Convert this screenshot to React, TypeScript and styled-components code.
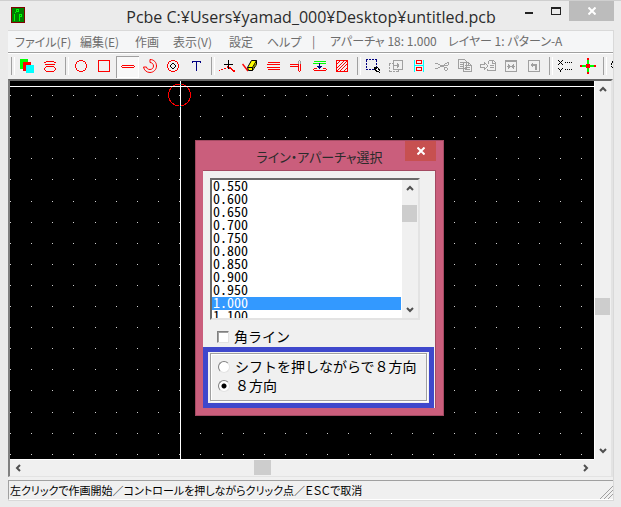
import React from "react";
import styled, { createGlobalStyle, css } from "styled-components";

const Global = createGlobalStyle`
  * { box-sizing: border-box; }
  html, body { margin: 0; padding: 0; }
  body { background: #ebebeb; overflow: hidden; }
  button { font: inherit; color: inherit; border: 0; background: none; padding: 0; margin: 0; }
`;

const jp = `"Noto Sans CJK JP", sans-serif`;

const AppWindow = styled.div`
  min-height: 100vh;
  display: flex;
  flex-direction: column;
  padding: 0 7px 6px 8px;
  background: #ebebeb;
  border-top: 1px solid #cfcfcf;
  font-family: ${jp};
`;

const TitleBar = styled.header`
  display: grid;
  grid-template-columns: 100px minmax(0, 1fr) 100px;
  height: 29px;
`;

const Logo = styled.svg`
  width: 14px;
  height: 16px;
  margin: 6px 0 0 3px;
`;

const Title = styled.h1`
  margin: 0;
  padding-top: 3px;
  font: 400 16px/26px "Open Sans", ${jp};
  color: #2b2b2b;
  text-align: center;
  white-space: nowrap;
`;

const Caption = styled.div`
  display: flex;
  justify-content: flex-end;
  align-items: flex-start;
`;

const CaptionButton = styled.button<{ $close?: boolean }>`
  width: ${(p) => (p.$close ? 45 : 27)}px;
  height: 20px;
  background: ${(p) => (p.$close ? "#bcbcbc" : "transparent")};
  svg { display: block; margin: 0 auto; }
`;

const Client = styled.main`
  flex: 1;
  display: flex;
  flex-direction: column;
  min-width: 0;
  border-top: 1px solid #d9d9d9;
  border-right: 1px solid #d9d9d9;
  border-bottom: 1px solid #d9d9d9;
  background: #f0f0f0;
`;

const MenuBar = styled.nav`
  display: grid;
  grid-template-columns: 65px 55px 38px 56px 38px 45px 18px 118px 1fr;
  height: 22px;
  padding-left: 7px;
  background: #f5f6f7;
  border-bottom: 1px solid #a0a0a0;
  box-shadow: inset 0 -1px 0 #fafafa;
  font: 12px/20px ${jp};
  font-feature-settings: "palt";
  color: #6d6d6d;
`;

const MenuItem = styled.button`
  text-align: left;
  white-space: nowrap;
`;

const MenuInfo = styled.span`
  white-space: nowrap;
`;

const ToolBar = styled.div`
  display: flex;
  height: 26px;
  padding-top: 2px;
  overflow: hidden;
  border-top: 1px solid #fff;
`;

const Separator = styled.span`
  flex: none;
  width: 8px;
  height: 20px;
  padding-left: 3px;
  &::before {
    content: "";
    display: block;
    width: 2px;
    height: 18px;
    margin-top: 1px;
    border-left: 1px solid #a0a0a0;
    border-right: 1px solid #fff;
  }
`;

const ToolButton = styled.button<{ $pressed?: boolean }>`
  flex: none;
  width: 23px;
  height: 22px;
  padding: 2px 3px 3px;
  ${(p) =>
    p.$pressed &&
    css`
      background: #f8f8f8;
      box-shadow: inset 1px 1px 0 #a0a0a0, inset -1px -1px 0 #fff;
    `}
  svg { display: block; width: 17px; height: 17px; }
`;

const Workspace = styled.div`
  flex: 1;
  display: grid;
  grid-template-columns: minmax(0, 1fr) 17px;
  grid-template-rows: minmax(0, 1fr) 17px;
  border-top: 2px solid #696969;
  border-left: 2px solid #808080;
  border-right: 2px solid #e3e3e3;
  border-bottom: 1px solid #e3e3e3;
`;

const Board = styled.section`
  position: relative;
  background: #000;
  min-height: 340px;
`;

const BoardDrawing = styled.svg`
  position: absolute;
  inset: 0;
  width: 100%;
  height: 100%;
`;

const ScrollTrack = styled.div<{ $vertical?: boolean }>`
  display: flex;
  flex-direction: ${(p) => (p.$vertical ? "column" : "row")};
  background: #f0f0f0;
  border-left: ${(p) => (p.$vertical ? "1px solid #fff" : "0")};
  border-top: ${(p) => (p.$vertical ? "0" : "1px solid #fff")};
`;

const ScrollSpace = styled.span<{ $grow: number }>`
  flex: ${(p) => p.$grow} 1 0;
`;

const ScrollThumb = styled.span<{ $vertical?: boolean }>`
  flex: none;
  width: ${(p) => (p.$vertical ? 15 : 17)}px;
  height: ${(p) => (p.$vertical ? 17 : 15)}px;
  background: #cdcdcd;
`;

const ArrowButton = styled.button<{ $turn: number }>`
  flex: none;
  width: 16px;
  height: 16px;
  svg { display: block; margin: auto; transform: rotate(${(p) => p.$turn}deg); }
`;

const StatusBar = styled.footer`
  display: flex;
  justify-content: space-between;
  height: 20px;
  margin-top: 3px;
  padding-left: 1px;
  border-top: 1px solid #a0a0a0;
  border-left: 1px solid #a0a0a0;
  border-bottom: 1px solid #fff;
  font: 11px/18px ${jp};
  color: #000;
  white-space: nowrap;
`;

const StatusText = styled.span`
  font-feature-settings: "palt";
`;

const Grip = styled.svg`
  width: 14px;
  height: 14px;
  align-self: flex-end;
`;

const Dialog = styled.section`
  position: absolute;
  left: 185px;
  top: 59px;
  width: 249px;
  padding: 0 7px 7px;
  background: #ca5e7c;
  border: 1px solid #a34a62;
`;

const DialogHeader = styled.header`
  display: grid;
  grid-template-columns: 31px 1fr 31px;
  height: 29px;
`;

const DialogTitle = styled.h2`
  grid-column: 2;
  margin: 0;
  padding-top: 3px;
  font: 400 13px/26px ${jp};
  font-feature-settings: "palt";
  color: #2b2b2b;
  text-align: center;
  white-space: nowrap;
`;

const DialogClose = styled.button`
  height: 20px;
  background: #c75050;
  svg { display: block; margin: auto; }
`;

const DialogBody = styled.form`
  padding: 7px 0 0;
  background: #f0f0f0;
  border: 1px solid #a34a62;
  border-bottom: 0;
  border-left: 0;
`;

const ListFrame = styled.div`
  display: flex;
  width: 210px;
  height: 142px;
  margin-left: 7px;
  border: 2px solid #696969;
  border-right-color: #e3e3e3;
  border-bottom-color: #e3e3e3;
  background: #fff;
`;

const ApertureList = styled.select`
  flex: 1;
  min-width: 0;
  height: 138px;
  padding: 0;
  border: 0;
  outline: 0;
  overflow: hidden;
  scrollbar-width: none;
  background: #fff;
  font: 14px/13px ${jp};
  font-feature-settings: "hwid";
  color: #000;
  option {
    display: flex;
    align-items: center;
    height: 13px;
    min-height: 13px;
    padding: 0 1px 3px;
    line-height: 13px;
    overflow: hidden;
  }
  option:checked {
    background: linear-gradient(#3399ff, #3399ff);
    color: #fff;
    -webkit-text-fill-color: #fff;
  }
`;

const Choice = styled.label`
  display: flex;
  align-items: center;
  gap: 5px;
  height: 19px;
  font: 14px/19px ${jp};
  color: #000;
  white-space: nowrap;
`;

const CheckRow = styled.div`
  padding: 7px 0 1px 14px;
`;

const CheckBox = styled.input`
  appearance: none;
  width: 12px;
  height: 12px;
  margin: 0;
  background: #fff;
  border: 1px solid #808080;
  border-right-color: #e3e3e3;
  border-bottom-color: #e3e3e3;
  box-shadow: inset 1px 1px 0 #a0a0a0;
`;

const Radio = styled.input`
  appearance: none;
  width: 12px;
  height: 12px;
  margin: 0;
  border-radius: 50%;
  background: #fff;
  border: 1px solid #808080;
  border-right-color: #e3e3e3;
  border-bottom-color: #e3e3e3;
  &:checked { background: radial-gradient(circle, #000 0 2px, #fff 3px); }
`;

const Highlight = styled.div`
  width: 231px;
  padding: 1px 2px 2px;
  border: 5px solid #3f48cc;
`;

const Group = styled.fieldset`
  margin: 0;
  padding: 3px 0 5px 7px;
  min-width: 0;
  border: 1px solid #a0a0a0;
  box-shadow: inset 1px 1px 0 #fff, 1px 1px 0 #fff;
`;

const R = "#f00";
const G = "#a0a0a0";

const icons: Record<string, React.ReactNode> = {
  layers: (
    <>
      <path d="M1 1h8v10H1z" fill="#0f0" />
      <path d="M4 4h8v9H4z" fill={R} />
      <path d="M7 7h8v8H7z" fill="#0ff" />
    </>
  ),
  pads: (
    <g fill="none" stroke={R}>
      <path d="M4 3.5h8M2 4.5h2M12 4.5h2M3 6.5h10" />
      <path d="M4 8.5h8M4 13.5h8M3.5 9v1M12.5 9v1M2.5 10v2M13.5 10v2M3.5 12v1M12.5 12v1" />
    </g>
  ),
  circle: <path d="M6 2.5h4M6 13.5h4M2.5 6v4M13.5 6v4M4 3.5h2M10 3.5h2M4 12.5h2M10 12.5h2M3.5 4v2M3.5 10v2M12.5 4v2M12.5 10v2" stroke={R} />,
  square: <rect x="2.5" y="2.5" width="11" height="11" fill="none" stroke={R} />,
  line: <path d="M3 7.5h12M3 9.5h12M2 8.5h1M15 8.5h1" stroke={R} />,
  arc: (
    <g fill="none" stroke={R} shapeRendering="auto">
      <path d="M8 1.5c4 0 6.500 3 6.500 6.500s-3 6.500-6.500 6.500-6-2.500-6.500-5.500" />
      <path d="M8 1.500v3c2 0 3.500 1.500 3.500 3.500S10 11.500 8 11.500 4.500 10.500 4.500 9h-3" />
    </g>
  ),
  donut: (
    <>
      <path d="M6 2.5h4M6 13.5h4M2.5 6v4M13.500 6v4M4 3.500h2M10 3.500h2M4 12.500h2M10 12.500h2M3.500 4v2M3.500 10v2M12.500 4v2M12.500 10v2" stroke={R} />
      <path d="M7 5.500h2M7 10.500h2M5.500 7v2M10.500 7v2M6 6.500h1M9 6.500h1M6 9.500h1M9 9.500h1" stroke="#000" />
    </>
  ),
  text: <path d="M4 3h9v2h-1v-1H9v9H8V4H5v1H4z" fill="#000080" />,
  bend: (
    <>
      <path d="M0 12h2v-1h3v-1h3v-2h2v1h2v1h1v1h1v1h2v2h-2v-1h-1v-1h-1v-1h-2v-1H7v1H4v1H1v1H0z" fill={R} />
      <path d="M9.500 2v9M5 6.500h9" stroke="#000" />
    </>
  ),
  eraser: (
    <>
      <path d="M0.500 6l5.500 7" stroke={R} strokeWidth="1.500" shapeRendering="auto" />
      <path d="M5.500 9.500l4-7h5v4l-4 6h-4z" fill="#ff0" stroke="#000" shapeRendering="auto" />
      <path d="M5.500 9.500h5l4-7M10.500 9.500v3" fill="none" stroke="#000" shapeRendering="auto" />
      <path d="M11 10l3-5v2l-3 5z" fill="#808000" />
    </>
  ),
  bars: <path d="M3 4.500h12M2 6.500h13M2 9.500h13M3 11.500h12" stroke={R} />,
  join: (
    <>
      <path d="M2 6.500h9M2 8.500h8M10.500 6v7M12.500 6v7M11 13.500h1" stroke={R} />
      <path d="M10.500 3v3M12.500 3v3M11 2.500h1" stroke={G} />
    </>
  ),
  gap: (
    <>
      <path d="M3 3.500h12M2 5.500h13" stroke="#0f0" />
      <path d="M3 10.500h3M12 10.500h3M2 11.500h1M15 11.500h1M3 12.500h12" stroke={R} />
      <path d="M9 5v3h2l-2.500 3L6 8h2V5z" fill="#000080" />
    </>
  ),
  hatch: (
    <g fill="none" stroke={R}>
      <rect x="2.500" y="2.500" width="11" height="11" />
      <path d="M3 6l3-3M3 10l7-7M3 13L13 3M6 13l7-7M10 13l3-3" />
    </g>
  ),
  select: (
    <>
      <path d="M1 1.500h11M1.500 2v10M11.500 2v7M1 11.500h8" stroke="#000080" strokeDasharray="2 1" />
      <path d="M9 9h4v1h1v1h1v2h-1v1h-3v-1h-1v-1H9z" fill="#000" />
      <path d="M11 11h1v-1h1v2h1v1h-2v-1h-1z" fill="#fff" />
      <path d="M14 14h1v1h-1z" fill="#000" />
    </>
  ),
  move: (
    <g fill="none" stroke={G}>
      <rect x="5.500" y="2.500" width="9" height="9" />
      <path d="M1 5.500h4M1.500 6v8M2 13.500h8M10.500 12v2" strokeDasharray="2 1" />
      <path d="M5 7.500h6M9.500 5v5M10.500 6v3" />
    </g>
  ),
  align: (
    <>
      <path d="M3.500 2v12M12.500 2v12M4 7.500h8" stroke="#0ff" />
      <g fill="none" stroke={R}>
        <path d="M5.500 2.500h5v3h-5zM5.500 9.500h5v3h-5z" />
      </g>
    </>
  ),
  cut: (
    <g fill="none" stroke={G}>
      <path d="M1 5.500h3M4 6.500h2M6 7.500h4M1 10.500h3M4 9.500h2M6 8.500h4M10.500 6v2M11 5.500h2M13 4.500h2M14.500 5v2M11 7.500h3M10.500 9v3M11 9.500h2M13.500 10v2M11 12.500h2" />
    </g>
  ),
  copy: (
    <g fill="none" stroke={G}>
      <path d="M1.500 1.500h6l2 2v7h-8zM6.500 4.500h5l3 3v6h-8z" />
      <path d="M3 4.500h3M3 6.500h3M3 8.500h3M8 7.500h3M8 9.500h5M8 11.500h5M11.500 5v2.500h3" />
    </g>
  ),
  paste: (
    <g fill="none" stroke={G}>
      <path d="M8.500 2.500h5l2 2v8h-8v-2M8.500 2.500v3M12.500 3v2.500h3M10 7.500h4M10 9.500h4" />
      <path d="M0.500 6.500h4v-2l3.500 3.500-3.500 3.500v-2h-4z" />
    </g>
  ),
  flip: (
    <g stroke={G}>
      <path d="M2.500 2.500h11v11h-11z" fill="none" />
      <path d="M3 3.500h10M4 8.500h8M5.500 6v5M10.500 6v5M6.500 7v3M9.500 7v3" />
    </g>
  ),
  rotate: (
    <>
      <path d="M2.500 2.500h11v11h-11z" fill="none" stroke={G} />
      <path d="M4 7l3-3v2h4v6H9V8H7v2z" fill={G} />
    </>
  ),
  coords: (
    <>
      <path d="M1 2h1v1H1zM5 2h1v1H5zM2 3h1v1H2zM4 3h1v1H4zM3 4h1v1H3zM2 5h1v1H2zM4 5h1v1H4zM1 6h1v1H1zM5 6h1v1H5zM1 10h1v1H1zM5 10h1v1H5zM2 11h1v1H2zM4 11h1v1H4zM3 12h1v2H3z" fill="#000" />
      <path d="M8 4.500h8M8 11.500h8" stroke="#000" strokeDasharray="1 1" />
    </>
  ),
  origin: (
    <>
      <path d="M7 0h2v16H7zM0 7h16v2H0z" fill="#0f0" />
      <path d="M7 0h2v2H7zM7 14h2v2H7zM0 7h2v2H0zM14 7h2v2h-2zM6 6h4v4H6z" fill={R} />
    </>
  ),
  zoom: <circle cx="5.500" cy="7" r="5" fill="none" stroke="#000" strokeDasharray="2 1" />,
};

const toolGroups: [string, string][][] = [
  [["layers", "レイヤー"], ["pads", "パッド"]],
  [["circle", "円"], ["square", "四角"], ["line", "ライン"], ["arc", "円弧"], ["donut", "ドーナツ"], ["text", "文字"]],
  [["bend", "折り曲げ"], ["eraser", "消去"], ["bars", "平行"], ["join", "結合"], ["gap", "間隔"], ["hatch", "塗りつぶし"]],
  [["select", "選択"], ["move", "移動"], ["align", "整列"], ["cut", "切り取り"], ["copy", "コピー"], ["paste", "貼り付け"], ["flip", "反転"], ["rotate", "回転"]],
  [["coords", "座標"], ["origin", "原点"]],
  [["zoom", "ズーム"]],
];

const menus = ["ファイル(F)", "編集(E)", "作画", "表示(V)", "設定", "ヘルプ"];

const apertures = ["0.550", "0.600", "0.650", "0.700", "0.750", "0.800", "0.850", "0.900", "0.950", "1.000", "1.100"];

const dotPath = Array.from({ length: 90 }, (_, c) =>
  Array.from({ length: 60 }, (_, r) => `M${Math.round(c * 21.15)} ${Math.round(14 + r * 21.1)}h1v1h-1z`).join("")
).join("");

function Arrow({ turn, label }: { turn: number; label: string }) {
  return (
    <ArrowButton type="button" $turn={turn} aria-label={label}>
      <svg width="8" height="8" viewBox="0 0 8 8">
        <path d="M1 6l3-3 3 3" fill="none" stroke="#505050" strokeWidth="2" />
      </svg>
    </ArrowButton>
  );
}

function ScrollBar({ vertical, before, after }: { vertical?: boolean; before: number; after: number }) {
  return (
    <ScrollTrack $vertical={vertical}>
      <Arrow turn={vertical ? 0 : -90} label={vertical ? "上へ" : "左へ"} />
      <ScrollSpace $grow={before} />
      <ScrollThumb $vertical={vertical} />
      <ScrollSpace $grow={after} />
      <Arrow turn={vertical ? 180 : 90} label={vertical ? "下へ" : "右へ"} />
    </ScrollTrack>
  );
}

function ApertureDialog() {
  return (
    <Dialog role="dialog" aria-labelledby="dialog-title">
      <DialogHeader>
        <DialogTitle id="dialog-title">ライン・アパーチャ選択</DialogTitle>
        <DialogClose type="button" aria-label="閉じる">
          <svg width="8" height="8" viewBox="0 0 8 8">
            <path d="M0.500 0.500l7 7M7.500 0.500l-7 7" stroke="#fff" strokeWidth="2" />
          </svg>
        </DialogClose>
      </DialogHeader>
      <DialogBody>
        <ListFrame>
          <ApertureList size={11} defaultValue="1.000" aria-label="アパーチャ">
            {apertures.map((a) => (
              <option key={a}>{a}</option>
            ))}
          </ApertureList>
          <ScrollBar vertical before={9} after={82} />
        </ListFrame>
        <CheckRow>
          <Choice>
            <CheckBox type="checkbox" />
            角ライン
          </Choice>
        </CheckRow>
        <Highlight>
          <Group>
            <Choice>
              <Radio type="radio" name="direction" />
              シフトを押しながらで８方向
            </Choice>
            <Choice>
              <Radio type="radio" name="direction" defaultChecked />
              ８方向
            </Choice>
          </Group>
        </Highlight>
      </DialogBody>
    </Dialog>
  );
}

export default function App() {
  return (
    <>
      <Global />
      <AppWindow>
        <TitleBar>
          <Logo viewBox="0 0 14 16" shapeRendering="crispEdges">
            <rect x="0.500" y="0.500" width="13" height="15" fill="#008000" stroke="#800000" />
            <path d="M3.500 14V6.500M4 5.500h1M5.500 2.500h2v2h-2zM8.500 14v-4M8.500 7.500h2v2h-2z" fill="none" stroke="#0f0" />
          </Logo>
          <Title>Pcbe C:¥Users¥yamad_000¥Desktop¥untitled.pcb</Title>
          <Caption>
            <CaptionButton aria-label="最小化">
              <svg width="8" height="8" viewBox="0 0 8 8"><path d="M0 5h8v2H0z" fill="#222" /></svg>
            </CaptionButton>
            <CaptionButton aria-label="最大化">
              <svg width="10" height="8" viewBox="0 0 10 8"><path d="M0 0h10v8H0zM1 2v5h8V2z" fill="#222" fillRule="evenodd" /></svg>
            </CaptionButton>
            <CaptionButton $close aria-label="閉じる">
              <svg width="8" height="8" viewBox="0 0 8 8"><path d="M0.500 0.500l7 7M7.500 0.500l-7 7" stroke="#fff" strokeWidth="2" /></svg>
            </CaptionButton>
          </Caption>
        </TitleBar>
        <Client>
          <MenuBar>
            {menus.map((m) => (
              <MenuItem key={m}>{m}</MenuItem>
            ))}
            <MenuInfo>|</MenuInfo>
            <MenuInfo>アパーチャ 18: 1.000</MenuInfo>
            <MenuInfo>レイヤー 1: パターン-A</MenuInfo>
          </MenuBar>
          <ToolBar role="toolbar">
            {toolGroups.map((group, i) => (
              <React.Fragment key={i}>
                <Separator />
                {group.map(([id, label]) => (
                  <ToolButton key={id} $pressed={id === "line"} aria-pressed={id === "line"} aria-label={label}>
                    <svg viewBox="0 0 17 17" shapeRendering="crispEdges">{icons[id]}</svg>
                  </ToolButton>
                ))}
              </React.Fragment>
            ))}
          </ToolBar>
          <Workspace>
            <Board>
              <BoardDrawing shapeRendering="crispEdges">
                <path d={dotPath} fill="#d0d0d0" />
                <circle cx="169.500" cy="14" r="11" fill="none" stroke="#f00" />
                <line x1="170.500" x2="170.500" y1="0" y2="100%" stroke="#fff" />
                <line x1="0" x2="100%" y1="5.500" y2="5.500" stroke="#fff" />
                <path d="M170 3h1v1h-1zM170 25h1v1h-1z" fill="#0ff" />
              </BoardDrawing>
              <ApertureDialog />
            </Board>
            <ScrollBar vertical before={201} after={128} />
            <ScrollBar before={228} after={307} />
          </Workspace>
          <StatusBar>
            <StatusText>左クリックで作画開始／コントロールを押しながらクリック点／ＥＳＣで取消</StatusText>
            <Grip viewBox="0 0 14 14">
              <path d="M1 14L14 1M5 14l9-9M9 14l5-5" stroke="#a0a0a0" strokeWidth="1" />
            </Grip>
          </StatusBar>
        </Client>
      </AppWindow>
    </>
  );
}
